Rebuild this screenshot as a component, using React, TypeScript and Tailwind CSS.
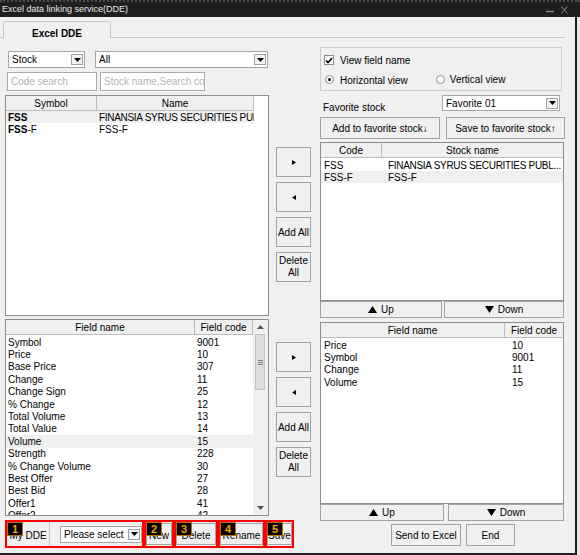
import React from "react";

function DownArrow() {
  return (
    <svg width="7" height="4" viewBox="0 0 7 4">
      <path d="M0 0H7L3.5 4Z" fill="#000" />
    </svg>
  );
}

function Select({ text, className }: { text: string; className: string }) {
  return (
    <div className={"flex items-center bg-white border border-[#a5a5a5] " + className}>
      <span className="flex-1 pl-[3px] truncate whitespace-nowrap">{text}</span>
      <span className="w-[12px] h-[11px] mr-[1px] flex items-center justify-center border border-[#a0a0a0] bg-[#f3f3f3]">
        <DownArrow />
      </span>
    </div>
  );
}

function Btn({ className, children }: { className: string; children: React.ReactNode }) {
  return (
    <div
      className={
        "flex items-center justify-center bg-[#f0f0f0] border border-[#a3a3a3] text-center whitespace-nowrap " +
        className
      }
    >
      {children}
    </div>
  );
}

function RightTri() {
  return (
    <svg width="4" height="5" viewBox="0 0 4 5">
      <path d="M0 0L4 2.5L0 5Z" fill="#000" />
    </svg>
  );
}
function LeftTri() {
  return (
    <svg width="4" height="5" viewBox="0 0 4 5">
      <path d="M4 0L0 2.5L4 5Z" fill="#000" />
    </svg>
  );
}
function UpTri() {
  return (
    <svg width="9" height="7" viewBox="0 0 9 7">
      <path d="M0 7L4.5 0L9 7Z" fill="#000" />
    </svg>
  );
}
function DownTri() {
  return (
    <svg width="9" height="7" viewBox="0 0 9 7">
      <path d="M0 0L9 0L4.5 7Z" fill="#000" />
    </svg>
  );
}

function Badge({ n }: { n: string }) {
  return (
    <span className="absolute left-0 top-0 w-[16px] h-[14px] bg-black border border-[#b86f00] text-[#f5a000] font-bold text-[11px] leading-[12px] flex items-center justify-center z-10">
      {n}
    </span>
  );
}

const fields: [string, string][] = [
  ["Symbol", "9001"],
  ["Price", "10"],
  ["Base Price", "307"],
  ["Change", "11"],
  ["Change Sign", "25"],
  ["% Change", "12"],
  ["Total Volume", "13"],
  ["Total Value", "14"],
  ["Volume", "15"],
  ["Strength", "228"],
  ["% Change Volume", "30"],
  ["Best Offer", "27"],
  ["Best Bid", "28"],
  ["Offer1", "41"],
  ["Offer2", "42"],
];

const chosen: [string, string][] = [
  ["Price", "10"],
  ["Symbol", "9001"],
  ["Change", "11"],
  ["Volume", "15"],
];

function MoveButtons() {
  return (
    <div className="flex flex-col gap-[5px]">
      <Btn className="w-[35px] h-[30px]">
        <RightTri />
      </Btn>
      <Btn className="w-[35px] h-[30px]">
        <LeftTri />
      </Btn>
      <Btn className="w-[35px] h-[30px]">Add All</Btn>
      <Btn className="w-[35px] h-[30px] flex-col leading-[12px]">
        <span>Delete</span>
        <span>All</span>
      </Btn>
    </div>
  );
}

export default function App() {
  return (
    <div className="w-[580px] h-[555px] flex flex-col bg-[#f0f0f0] text-[10px] text-black overflow-hidden font-['Liberation_Sans',Arial,sans-serif]">
      {/* Title bar */}
      <div className="h-[17px] shrink-0 bg-[#1f1f1f] border-t-2 border-dotted border-[#4c4c4c] flex items-center justify-between">
        <span className="pl-[2px] text-[9px] text-[#e8e8e8] whitespace-nowrap">Excel data linking service(DDE)</span>
        <div className="flex items-center gap-[7px] pr-[12px]">
          <svg width="8" height="8" viewBox="0 0 8 8">
            <path d="M0 5.5H8" stroke="#8a8a8a" strokeWidth="1.4" />
          </svg>
          <svg width="7" height="8" viewBox="0 0 7 8">
            <path d="M0.5 0.5L6.5 7.5M6.5 0.5L0.5 7.5" stroke="#8a8a8a" strokeWidth="1" />
          </svg>
        </div>
      </div>

      <div className="flex h-[538px]">
        <div className="w-[575px] h-full flex flex-col border-b-2 border-[#1f1f1f]">
          {/* Tab strip */}
          <div className="h-[21px] shrink-0 pt-[4px] pl-[3px] mr-[10px] border-b border-[#c8c8c8] flex">
            <div className="w-[108px] h-[17px] -mb-px bg-[#f0f0f0] border border-b-0 border-[#c8c8c8] rounded-t-[2px] flex justify-center pt-[4px] font-bold">
              Excel DDE
            </div>
          </div>

          <div className="flex items-start">
            {/* Left column */}
            <div className="ml-[5px] w-[264px] flex flex-col">
              <div className="mt-[13px] flex h-[17px]">
                <Select text="Stock" className="ml-[3px] w-[77px] h-full" />
                <Select text="All" className="ml-[10px] w-[173px] h-full" />
              </div>
              <div className="mt-[4px] flex h-[19px]">
                <div className="ml-[2px] w-[90px] h-full bg-white border border-[#ababab] flex items-center pl-[3px] text-[#b4b4b4] whitespace-nowrap overflow-hidden">
                  Code search
                </div>
                <div className="ml-[3px] w-[105px] h-full bg-white border border-[#ababab] flex items-center pl-[3px] text-[#b4b4b4] whitespace-nowrap overflow-hidden">
                  Stock name,Search code
                </div>
              </div>

              {/* Stock table */}
              <div className="mt-[4px] w-[264px] h-[221px] bg-white border border-[#8e8e8e] flex flex-col overflow-hidden">
                <div className="flex h-[15px] shrink-0">
                  <div className="w-[91px] bg-[#f0f0f0] border-r border-b border-[#bdbdbd] flex items-center justify-center">
                    Symbol
                  </div>
                  <div className="w-[157px] bg-[#f0f0f0] border-r border-b border-[#bdbdbd] flex items-center justify-center">
                    Name
                  </div>
                </div>
                <div className="flex h-[12px] w-[248px] bg-[#f0f0f0] items-center">
                  <div className="w-[91px] pl-[2px] font-bold">FSS</div>
                  <div className="w-[157px] pl-[2px] whitespace-nowrap overflow-hidden tracking-[-0.3px]">
                    FINANSIA SYRUS SECURITIES PUBLIC COMPANY LIMITED
                  </div>
                </div>
                <div className="flex h-[12px] w-[248px] items-center">
                  <div className="w-[91px] pl-[2px]">
                    <b>FSS</b>-F
                  </div>
                  <div className="w-[157px] pl-[2px]">FSS-F</div>
                </div>
              </div>

              {/* Field table */}
              <div className="mt-[3px] w-[264px] h-[197px] bg-white border border-[#8e8e8e] flex overflow-hidden">
                <div className="w-[247px] flex flex-col">
                  <div className="flex h-[15px] shrink-0">
                    <div className="w-[189px] bg-[#f0f0f0] border-r border-b border-[#bdbdbd] flex items-center justify-center">
                      Field name
                    </div>
                    <div className="w-[58px] bg-[#f0f0f0] border-r border-b border-[#bdbdbd] flex items-center justify-center">
                      Field code
                    </div>
                  </div>
                  <div className="pt-[1px] flex flex-col">
                    {fields.map(([n, c], i) => (
                      <div
                        key={n}
                        className={
                          i === 8
                            ? "flex h-[12.4px] items-center bg-[#f0f0f0] shrink-0"
                            : "flex h-[12.4px] items-center shrink-0"
                        }
                      >
                        <div className="w-[189px] pl-[2px] whitespace-nowrap">{n}</div>
                        <div className="w-[58px] pl-[2px]">{c}</div>
                      </div>
                    ))}
                  </div>
                </div>
                <div className="w-[15px] h-full bg-[#f0f0f0] flex flex-col">
                  <div className="h-[14px] flex items-center justify-center">
                    <svg width="7" height="4" viewBox="0 0 7 4">
                      <path d="M0 4L3.5 0L7 4Z" fill="#505050" />
                    </svg>
                  </div>
                  <div className="flex-1 flex flex-col">
                    <div className="ml-[2px] w-[10px] h-[56px] bg-[#dcdcdc] border border-[#c4c4c4] flex flex-col items-center justify-center gap-[1px]">
                      <span className="w-[5px] h-px bg-[#808080]" />
                      <span className="w-[5px] h-px bg-[#808080]" />
                      <span className="w-[5px] h-px bg-[#808080]" />
                    </div>
                  </div>
                  <div className="h-[14px] flex items-center justify-center">
                    <svg width="7" height="4" viewBox="0 0 7 4">
                      <path d="M0 0H7L3.5 4Z" fill="#505050" />
                    </svg>
                  </div>
                </div>
              </div>

              {/* Bottom bar */}
              <div className="mt-[4px] h-[28px] flex">
                <div className="relative w-[140px] h-full border-2 border-[#ff0000] flex items-center">
                  <Badge n="1" />
                  <div className="w-[43px] h-full flex items-center justify-center pt-[3px] border-r border-[#c4c4c4] whitespace-nowrap">
                    My DDE
                  </div>
                  <Select text="Please select" className="ml-[10px] w-[82px] h-[17px]" />
                </div>
                <div className="relative w-[31px] h-full border-2 border-[#ff0000] flex items-center justify-center">
                  <Badge n="2" />
                  <Btn className="w-[26px] h-[22px] pt-[3px]">New</Btn>
                </div>
                <div className="relative w-[45px] h-full border-2 border-[#ff0000] flex items-center justify-center">
                  <Badge n="3" />
                  <Btn className="w-[40px] h-[22px] pt-[3px]">Delete</Btn>
                </div>
                <div className="relative w-[48px] h-full border-2 border-[#ff0000] flex items-center justify-center">
                  <Badge n="4" />
                  <Btn className="w-[43px] h-[22px] pt-[3px]">Rename</Btn>
                </div>
                <div className="relative w-[30px] h-full border-2 border-[#ff0000] flex items-center justify-center">
                  <Badge n="5" />
                  <Btn className="w-[25px] h-[22px] pt-[3px]">Save</Btn>
                </div>
              </div>
            </div>

            {/* Middle column */}
            <div className="ml-[7px] w-[35px] flex flex-col">
              <div className="mt-[109px]">
                <MoveButtons />
              </div>
              <div className="mt-[60px]">
                <MoveButtons />
              </div>
            </div>

            {/* Right column */}
            <div className="ml-[9px] w-[245px] flex flex-col">
              <div className="mt-[9px] w-[242px] h-[44px] border border-[#cdcdcd] flex flex-col pl-[3px] pt-[7px]">
                <div className="flex items-center h-[10px]">
                  <span className="w-[10px] h-[10px] bg-white border border-[#8e8e8e] flex items-center justify-center">
                    <svg width="8" height="7" viewBox="0 0 8 7">
                      <path d="M1 3.5L3 5.5L7 1" stroke="#000" strokeWidth="1.6" fill="none" />
                    </svg>
                  </span>
                  <span className="ml-[6px]">View field name</span>
                </div>
                <div className="flex items-center mt-[9px] h-[10px]">
                  <span className="ml-[1px] w-[9px] h-[9px] rounded-full bg-white border border-[#8e8e8e] flex items-center justify-center mt-[1px]">
                    <span className="w-[3px] h-[3px] rounded-full bg-black" />
                  </span>
                  <span className="ml-[6px] mt-[2px]">Horizontal view</span>
                  <span className="ml-[28px] w-[9px] h-[9px] rounded-full bg-white border border-[#8e8e8e]" />
                  <span className="ml-[5px]">Vertical view</span>
                </div>
              </div>

              <div className="mt-[4px] h-[16px] flex">
                <span className="pl-[3px] pt-[5px] w-[122px]">Favorite stock</span>
                <Select text="Favorite 01" className="w-[118px] h-full" />
              </div>

              <div className="mt-[6px] h-[22px] flex">
                <Btn className="w-[120px] h-full">Add to favorite stock↓</Btn>
                <Btn className="ml-[6px] w-[119px] h-full">Save to favorite stock↑</Btn>
              </div>

              <div className="mt-[3px] w-[244px] h-[159px] bg-white border border-[#8e8e8e] flex flex-col overflow-hidden">
                <div className="flex h-[15px] shrink-0">
                  <div className="w-[61px] bg-[#f0f0f0] border-r border-b border-[#bdbdbd] flex items-center justify-center">
                    Code
                  </div>
                  <div className="flex-1 bg-[#f0f0f0] border-b border-[#bdbdbd] flex items-center justify-center">
                    Stock name
                  </div>
                </div>
                <div className="pt-[1px] flex flex-col">
                  <div className="flex h-[12px] items-center">
                    <div className="w-[61px] pl-[3px]">FSS</div>
                    <div className="flex-1 pl-[6px] whitespace-nowrap overflow-hidden tracking-[-0.3px]">
                      FINANSIA SYRUS SECURITIES PUBL...
                    </div>
                  </div>
                  <div className="flex h-[12px] items-center bg-[#f0f0f0]">
                    <div className="w-[61px] pl-[3px]">FSS-F</div>
                    <div className="flex-1 pl-[6px]">FSS-F</div>
                  </div>
                </div>
              </div>
              <div className="h-[17px] flex">
                <Btn className="w-[122px] h-full gap-[4px]">
                  <UpTri />
                  <span>Up</span>
                </Btn>
                <Btn className="ml-[2px] w-[120px] h-full gap-[4px]">
                  <DownTri />
                  <span>Down</span>
                </Btn>
              </div>

              <div className="mt-[4px] w-[244px] h-[182px] bg-white border border-[#8e8e8e] flex flex-col overflow-hidden">
                <div className="flex h-[15px] shrink-0">
                  <div className="w-[184px] bg-[#f0f0f0] border-r border-b border-[#bdbdbd] flex items-center justify-center">
                    Field name
                  </div>
                  <div className="flex-1 bg-[#f0f0f0] border-b border-[#bdbdbd] flex items-center justify-center">
                    Field code
                  </div>
                </div>
                <div className="pt-[1px] flex flex-col">
                  {chosen.map(([n, c]) => (
                    <div key={n} className="flex h-[12.4px] items-center shrink-0">
                      <div className="w-[184px] pl-[3px]">{n}</div>
                      <div className="flex-1 pl-[7px]">{c}</div>
                    </div>
                  ))}
                </div>
              </div>
              <div className="h-[17px] flex">
                <Btn className="w-[124px] h-full gap-[4px]">
                  <UpTri />
                  <span>Up</span>
                </Btn>
                <Btn className="ml-[4px] w-[116px] h-full gap-[4px]">
                  <DownTri />
                  <span>Down</span>
                </Btn>
              </div>

              <div className="mt-[3px] h-[22px] flex">
                <Btn className="ml-[71px] w-[70px] h-full">Send to Excel</Btn>
                <Btn className="ml-[5px] w-[49px] h-full">End</Btn>
              </div>
            </div>
          </div>
        </div>
        <div className="w-[2px] h-full bg-[#1f1f1f]" />
        <div className="w-[3px] h-full bg-[#e6e6e6]" />
      </div>
    </div>
  );
}
